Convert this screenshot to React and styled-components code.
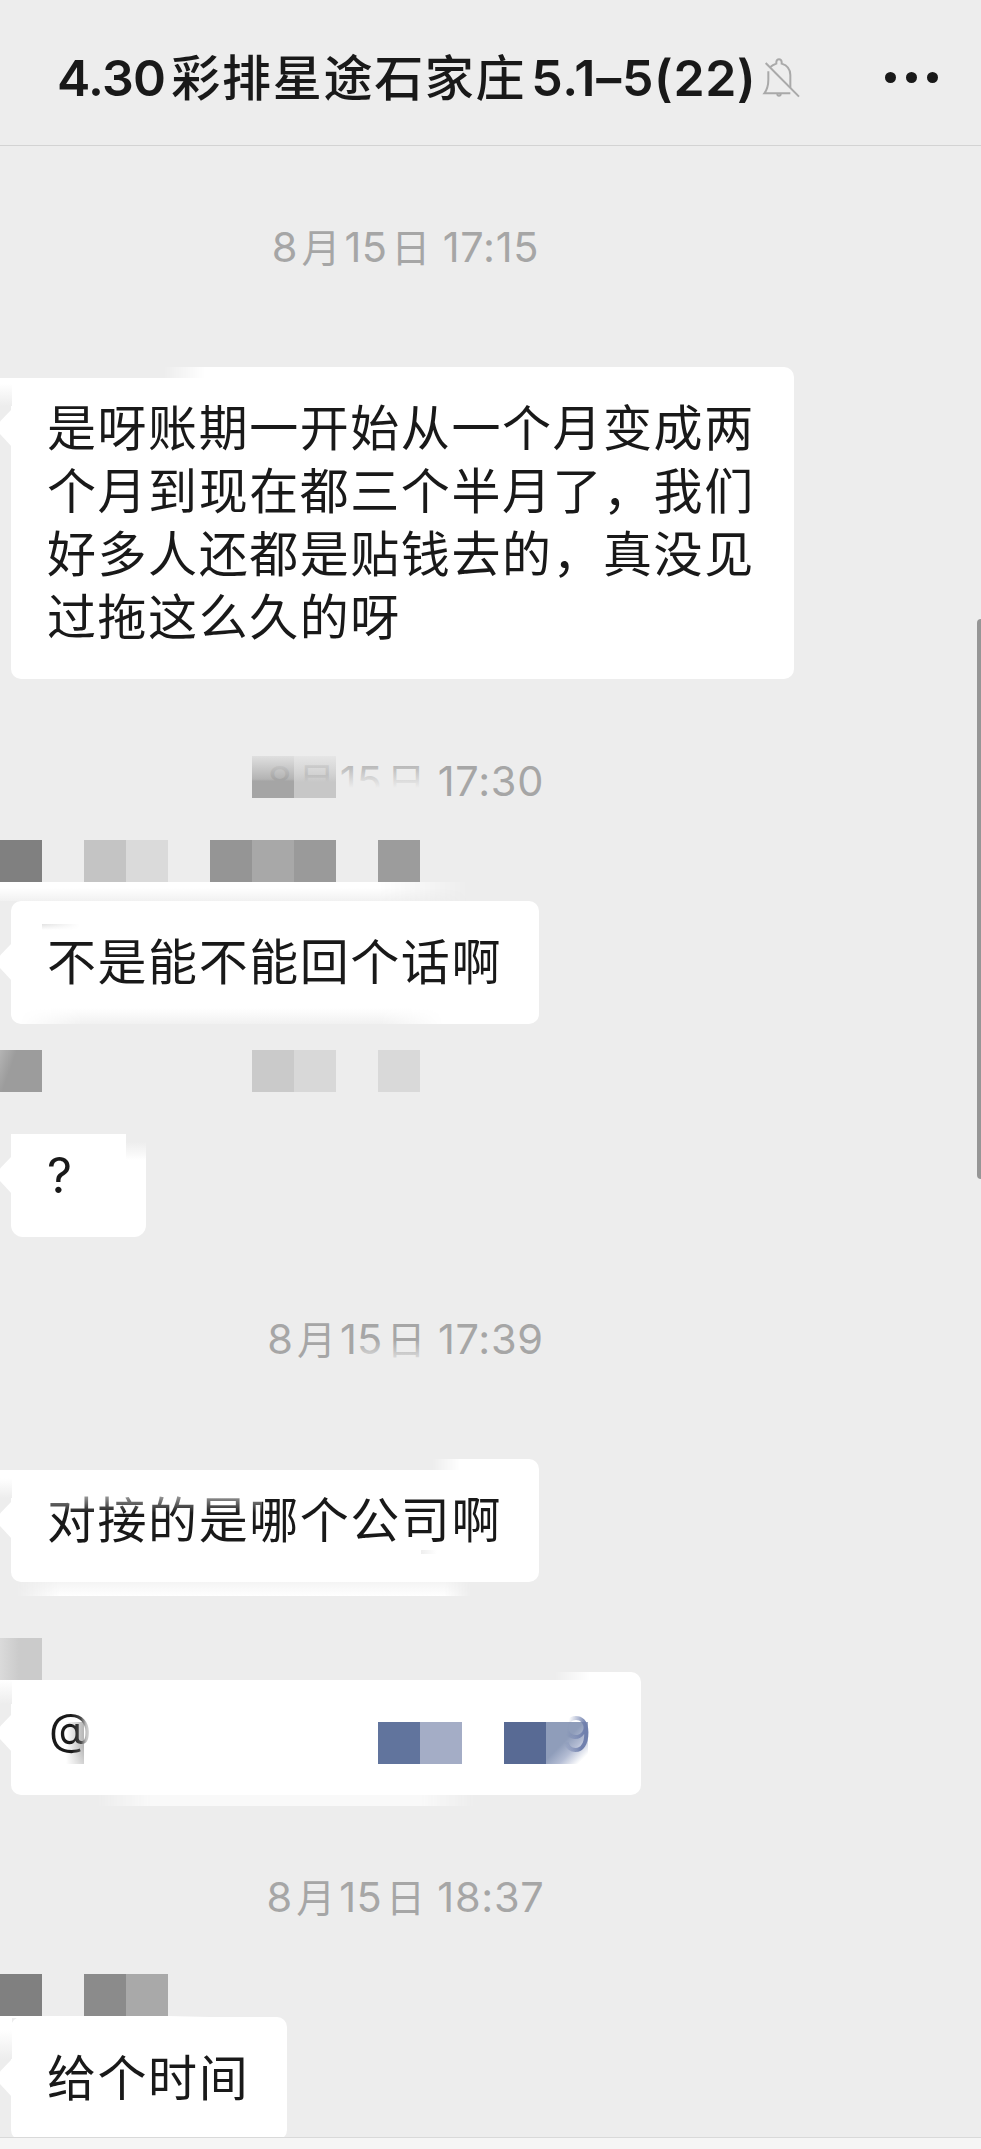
import React from 'react';
import styled, { createGlobalStyle } from 'styled-components';

const GlobalStyle = createGlobalStyle`
	body {
		margin: 0;
		background: #ededed;
		font-family: Inter, 'Noto Sans CJK SC', sans-serif;
		color: #191919;
	}
`;

const Screen = styled.div`
	display: flex;
	flex-direction: column;
	position: relative;
	width: 981px;
	height: 2149px;
	overflow: hidden;
	background: #ededed;
`;

const HeaderBar = styled.header`
	display: flex;
	flex: none;
	align-items: center;
	box-sizing: border-box;
	height: 146px;
	padding: 10px 43px 0 57px;
	border-bottom: 1px solid #d3d3d3;
`;

const Title = styled.h1`
	display: flex;
	align-items: baseline;
	margin: -2px 0 0;
	width: 705px;
	font-size: 50px;
	line-height: 64px;
	font-weight: 560;
	white-space: nowrap;
`;

const Latin = styled.span`
	letter-spacing: ${props => props.spacing || '0'};
`;

const Cjk = styled.span`
	margin: ${props => props.gap || '0'};
	font-family: 'Noto Sans CJK SC', sans-serif;
	font-weight: 500;
	font-size: ${props => props.size || 'inherit'};
	letter-spacing: ${props => props.spacing || '0'};
`;

const Dots = styled.div`
	display: flex;
	gap: 10px;
	margin-left: auto;

	i {
		width: 11px;
		height: 11px;
		border-radius: 50%;
		background: #191919;
	}
`;

const Messages = styled.main`
	display: flex;
	flex: 1;
	flex-direction: column;
	align-items: flex-start;
	min-height: 0;
	overflow: hidden;
`;

const TimeRow = styled.div`
	display: flex;
	flex: none;
	position: relative;
	align-items: baseline;
	justify-content: center;
	width: 811px;
	height: 50px;
	margin-top: ${props => props.top}px;
	font-size: 41.5px;
	line-height: 47px;
	color: #a6a6a6;
	white-space: pre;

	${Cjk} {
		font-weight: 400;
		font-size: 39px;
	}
`;

const MosaicRow = styled.div`
	display: flex;
	flex: none;
	position: relative;
	z-index: 1;
	height: 42px;
	margin-top: ${props => props.top}px;
`;

const Tile = styled.span`
	width: 42px;
	height: 42px;
	background: ${props => props.fill || 'transparent'};
`;

const Bubble = styled.div`
	flex: none;
	position: relative;
	box-sizing: border-box;
	width: ${props => props.width}px;
	height: ${props => props.height || 123}px;
	margin: ${props => props.top}px 0 0 11px;
	padding: ${props => props.padTop || 30}px 0 0 36px;
	border-radius: ${props => props.radius || '10px'};
	background: #fff;
	font-size: 49px;
	line-height: 63px;
	letter-spacing: 1.55px;
	white-space: nowrap;
`;

const Tail = styled.i`
	position: absolute;
	left: -11px;
	top: ${props => props.top || 42}px;
	width: 12px;
	height: 38px;
	background: #fff;
	clip-path: polygon(100% 0, 0 33%, 0 66%, 100% 100%);
`;

// soft rectangle laid over a bubble edge or a line of text
const Smudge = styled.i`
	position: absolute;
	left: ${props => props.x}px;
	top: ${props => props.y}px;
	width: ${props => props.w}px;
	height: ${props => props.h}px;
	background: ${props => props.fill};
	mask-image: ${props => props.fade || 'none'};
`;

const BubbleMosaic = styled.div`
	display: flex;
	position: absolute;
	left: 367px;
	top: 50px;
`;

const AtSign = styled.span`
	display: block;
	position: relative;
	width: 50px;
	margin: -4px 0 0 2px;
	font-size: 44px;
	background: linear-gradient(90deg, #191919 45%, #484848 64%, #c0c0c0 74%, #dedede 84%);
	background-clip: text;
	color: transparent;
`;

const LinkDigit = styled.span`
	position: absolute;
	left: 550px;
	top: 31px;
	background: linear-gradient(100deg, rgba(112, 128, 173, 0) 25%, #7080ad 65%);
	background-clip: text;
	color: transparent;
`;

const ScrollThumb = styled.i`
	position: absolute;
	right: 0;
	top: 619px;
	width: 4px;
	height: 560px;
	border-radius: 4px 0 0 4px;
	background: #969696;
`;

const InputBar = styled.footer`
	flex: none;
	height: 11px;
	border-top: 1px solid #d9d9d9;
	background: #f5f5f5;
`;

const MutedBell = () => (
	<svg
		width="40"
		height="42"
		viewBox="66 78 120 126"
		fill="none"
		stroke="#a9a9a9"
		strokeWidth="6"
	>
		<path d="M85 121V146C85 167 81 176 73 187H151" />
		<path d="M91 108Q98 102 109 98V93Q110 85 117 85Q124 85 125 93V98C141 103 151 114 151 132V170" />
		<path d="M77 96L177 197" />
		<path d="M112 189Q112 194 117 194Q122 194 122 189" />
	</svg>
);

const Time = ({ top, clock, children }) => (
	<TimeRow top={top}>
		<Latin>8</Latin>
		<Cjk gap="0 4px">月</Cjk>
		<Latin spacing="0.3px">15</Latin>
		<Cjk gap="0 0 0 4px">日</Cjk>
		<Latin spacing="0.7px"> {clock}</Latin>
		{children}
	</TimeRow>
);

const Mosaic = ({ top, tiles }) => (
	<MosaicRow top={top}>
		{tiles.map((fill, i) => <Tile key={i} fill={fill} />)}
	</MosaicRow>
);

const fadeRight = 'linear-gradient(90deg, #000 80%, transparent)';
const fadeBoth = 'linear-gradient(90deg, transparent, #000 15%, #000 85%, transparent)';

const App = () => (
	<Screen>
		<GlobalStyle />
		<HeaderBar>
			<Title>
				<Latin spacing="-0.7px">4.30</Latin>
				<Cjk gap="0 5px 0 6px" size="49px" spacing="1.7px">彩排星途石家庄</Cjk>
				<Latin spacing="0.7px">5.1–5(22)</Latin>
			</Title>
			<MutedBell />
			<Dots><i /><i /><i /></Dots>
		</HeaderBar>
		<Messages>
			<Time top={76} clock="17:15" />
			<Bubble top={95} width={783} height={312}>
				<Tail />
				<Smudge x={-11} y={0} w={205} h={11} fill="#ededed" fade={fadeRight} />
				<Smudge x={-11} y={11} w={12} h={28} fill="linear-gradient(#fff 20%, #ededed)" />
				是呀账期一开始从一个月变成两<br />
				个月到现在都三个半月了，我们<br />
				好多人还都是贴钱去的，真没见<br />
				过拖这么久的呀
			</Bubble>
			<Time top={77} clock="17:30">
				<Smudge x={252} y={0} w={42} h={42} fill="linear-gradient(rgba(222,222,222,.9), rgba(165,165,165,.8) 55%, #a5a5a5 60%)" />
				<Smudge x={294} y={0} w={42} h={42} fill="linear-gradient(rgba(228,228,228,.8), rgba(200,200,200,.75) 45%, #c7c7c7 62%)" />
				<Smudge x={252} y={42} w={84} h={8} fill="#ededed" />
				<Smudge x={336} y={5} w={90} h={45} fill="linear-gradient(rgba(237,237,237,.1), #ededed 60%)" />
			</Time>
			<Mosaic
				top={34}
				tiles={['#808080', '', '#c4c4c4', '#dadada', '', '#959595', '#a8a8a8', '#9a9a9a', '', '#9c9c9c']}
			/>
			<Bubble top={19} width={528}>
				<Tail />
				<Smudge x={-11} y={-19} w={470} h={19} fill="linear-gradient(#fff 30%, #f1f1f1)" fade={fadeRight} />
				<Smudge x={31} y={23} w={38} h={6} fill="linear-gradient(#e2e2e2, #fff)" fade="linear-gradient(90deg, #000, transparent)" />
				<Smudge x={8} y={107} w={425} h={16} fill="linear-gradient(#fff, #f1f1f1)" fade={fadeBoth} />
				不是能不能回个话啊
			</Bubble>
			<Mosaic
				top={26}
				tiles={['linear-gradient(110deg, #b4b4b4, #9c9c9c 30%)', '', '', '', '', '', '#cacaca', '#d8d8d8', '', '#d9d9d9']}
			/>
			<Bubble top={42} width={135} height={103} padTop={10} radius="0 0 12px 12px">
				<Tail top={22} />
				<Smudge x={115} y={0} w={20} h={26} fill="linear-gradient(#ededed 30%, #f8f8f8 75%, #fff)" />
				?
			</Bubble>
			<Time top={77} clock="17:39">
				<Smudge x={360} y={26} w={62} h={20} fill="linear-gradient(rgba(237,237,237,0), rgba(237,237,237,.8))" />
			</Time>
			<Bubble top={95} width={528}>
				<Tail />
				<Smudge x={-11} y={0} w={460} h={11} fill="#ededed" fade="linear-gradient(90deg, #000 94%, transparent)" />
				<Smudge x={-11} y={11} w={12} h={28} fill="linear-gradient(#fff 30%, #ededed)" />
				<Smudge x={5} y={123} w={455} h={14} fill="linear-gradient(#f4f4f4, #fff)" fade="linear-gradient(90deg, transparent, #000 10%, #000 94%, transparent)" />
				<Smudge x={410} y={91} w={16} h={4} fill="linear-gradient(90deg, #eee, #fff)" />
				对接的是哪个公司啊
				<Smudge x={36} y={36} w={215} h={18} fill="linear-gradient(rgba(255,255,255,.6), rgba(255,255,255,0))" />
			</Bubble>
			<Mosaic top={56} tiles={['linear-gradient(90deg, #dadada, #cbcbcb 45%)']} />
			<Bubble top={-8} width={630}>
				<Tail />
				<Smudge x={-11} y={0} w={590} h={8} fill="#ededed" fade="linear-gradient(90deg, #000 94%, transparent)" />
				<Smudge x={-11} y={8} w={12} h={24} fill="linear-gradient(#fff, #ededed)" />
				<Smudge x={85} y={123} w={380} h={11} fill="#f9f9f9" fade={fadeBoth} />
				<Smudge x={55} y={50} w={18} h={42} fill="linear-gradient(90deg, #fff, #b5b5b5)" fade="linear-gradient(#000 60%, rgba(0,0,0,.6))" />
				<AtSign>@</AtSign>
				<BubbleMosaic>
					<Tile fill="#61749d" />
					<Tile fill="#a4adc6" />
					<Tile />
					<Tile fill="#586a94" />
					<Tile fill="linear-gradient(135deg, #8f9dba 45%, #b4bdd4 65%, #fff 88%)" />
				</BubbleMosaic>
				<LinkDigit>9</LinkDigit>
			</Bubble>
			<Time top={77} clock="18:37" />
			<Mosaic top={52} tiles={['#808080', '', '#8b8b8b', '#a9a9a9']} />
			<Bubble top={1} width={276}>
				<Tail />
				<Smudge x={-11} y={-1} w={210} h={2} fill="#fff" fade={fadeRight} />
				<Smudge x={-11} y={0} w={12} h={42} fill="linear-gradient(#fff 30%, #ededed)" />
				给个时间
			</Bubble>
		</Messages>
		<ScrollThumb />
		<InputBar />
	</Screen>
);

export default App;
